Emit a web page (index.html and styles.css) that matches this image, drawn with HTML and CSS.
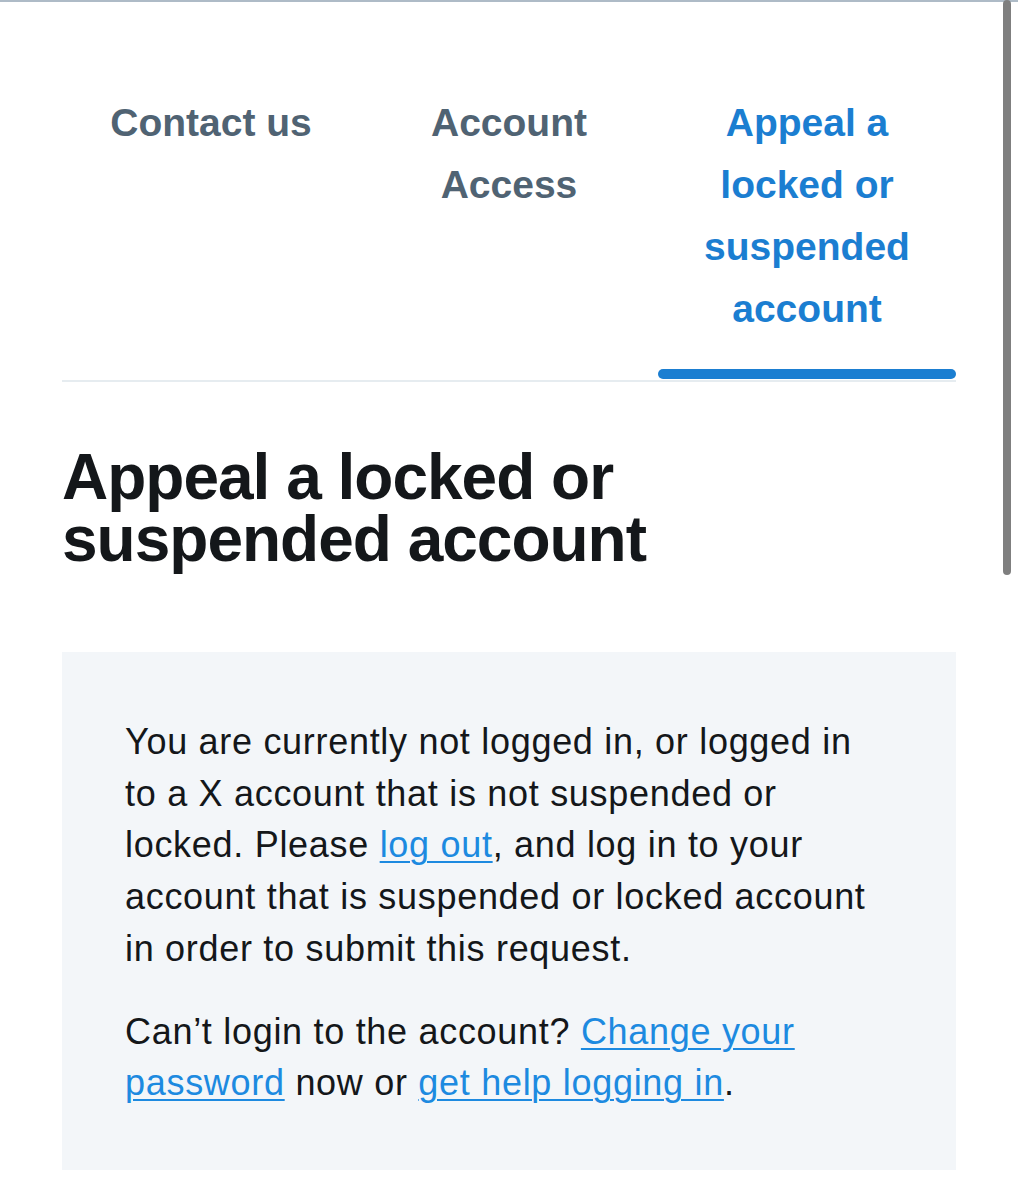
FILE: index.html
```html
<!DOCTYPE html>
<html lang="en">
<head>
<meta charset="utf-8">
<title>Appeal a locked or suspended account</title>
<link rel="stylesheet" href="styles.css">
</head>
<body>
<div class="topline"></div>
<main class="page">
  <nav class="tabs">
    <a class="tab">Contact us</a>
    <a class="tab">Account Access</a>
    <a class="tab active">Appeal a locked or suspended account</a>
  </nav>
  <h1 class="title">Appeal a locked or suspended account</h1>
  <section class="notice">
    <p>You are currently not logged in, or logged in to a X account that is not suspended or locked. Please <a class="link" href="#">log out</a>, and log in to your account that is suspended or locked account in order to submit this request.</p>
    <p>Can’t login to the account? <a class="link" href="#">Change your password</a> now or <a class="link" href="#">get help logging in</a>.</p>
  </section>
</main>
<div class="scrollbar"></div>
</body>
</html>
```

FILE: styles.css
```css
html, body {
  margin: 0;
  padding: 0;
  background: #ffffff;
}
body {
  font-family: "Liberation Sans", Arial, sans-serif;
  color: #14171a;
}
.topline {
  height: 2px;
  background: #aebbc7;
}
.page {
  padding: 90px 62px 0 62px;
}
.tabs {
  display: grid;
  grid-template-columns: 1fr 1fr 1fr;
  border-bottom: 2px solid #e6ecf0;
}
.tab {
  position: relative;
  text-align: center;
  font-size: 39px;
  font-weight: 700;
  line-height: 62px;
  color: #506373;
  padding: 0 40px 40px;
}
.tab.active {
  color: #1b7ed1;
}
.tab.active::after {
  content: "";
  position: absolute;
  left: 0;
  right: 0;
  bottom: 1px;
  height: 10px;
  border-radius: 5px;
  background: #1b7ed1;
}
.title {
  max-width: 720px;
  margin: 64px 0 82px;
  font-size: 64px;
  line-height: 62px;
  font-weight: 700;
  letter-spacing: -1px;
  color: #14171a;
}
.notice {
  background: #f3f6f9;
  padding: 64px 63px 61px;
}
.notice p {
  margin: 0;
  font-size: 36px;
  line-height: 51.7px;
  letter-spacing: 0.7px;
}
.notice p + p {
  margin-top: 31px;
}
.link {
  color: #1d8ae0;
  text-decoration: underline;
  text-underline-offset: 4px;
  text-decoration-thickness: 2px;
}
.scrollbar {
  position: fixed;
  top: 0;
  right: 7px;
  width: 8px;
  height: 575px;
  border-radius: 4px;
  background: #7f7f7f;
}
```
